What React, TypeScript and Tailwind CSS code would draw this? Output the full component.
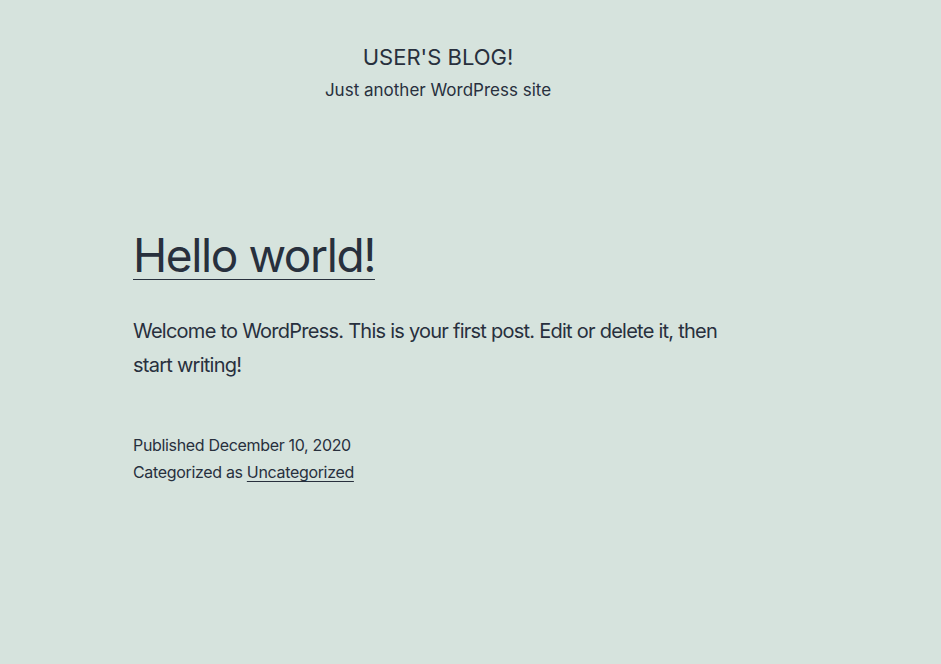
export default function App() {
  return (
    <div className="min-h-[664px] bg-[#d6e3dd] text-[#28303d] font-['Inter',sans-serif]">
      <div className="w-[876px]">
        <header className="flex flex-col items-center pt-[42px]">
          <p className="text-[22px] leading-[30px] uppercase">User's Blog!</p>
          <p className="mt-[4px] text-[17px] leading-[28px]">Just another WordPress site</p>
        </header>
        <main className="mx-auto mt-[121px] max-w-[610px]">
          <h2 className="text-[46px] leading-[60px] tracking-[-1.4px]">
            <a href="#" className="underline decoration-1 underline-offset-[7px]">Hello world!</a>
          </h2>
          <div className="mt-[29px] text-[20px] leading-[34px] tracking-[-0.75px]">
            <p>Welcome to WordPress. This is your first post. Edit or delete it, then start writing!</p>
          </div>
          <footer className="mt-[50px] text-[16px] leading-[27px] tracking-[-0.33px]">
            <p>Published December 10, 2020</p>
            <p>
              Categorized as <a href="#" className="underline decoration-1 underline-offset-[3px]">Uncategorized</a>
            </p>
          </footer>
        </main>
      </div>
    </div>
  );
}
